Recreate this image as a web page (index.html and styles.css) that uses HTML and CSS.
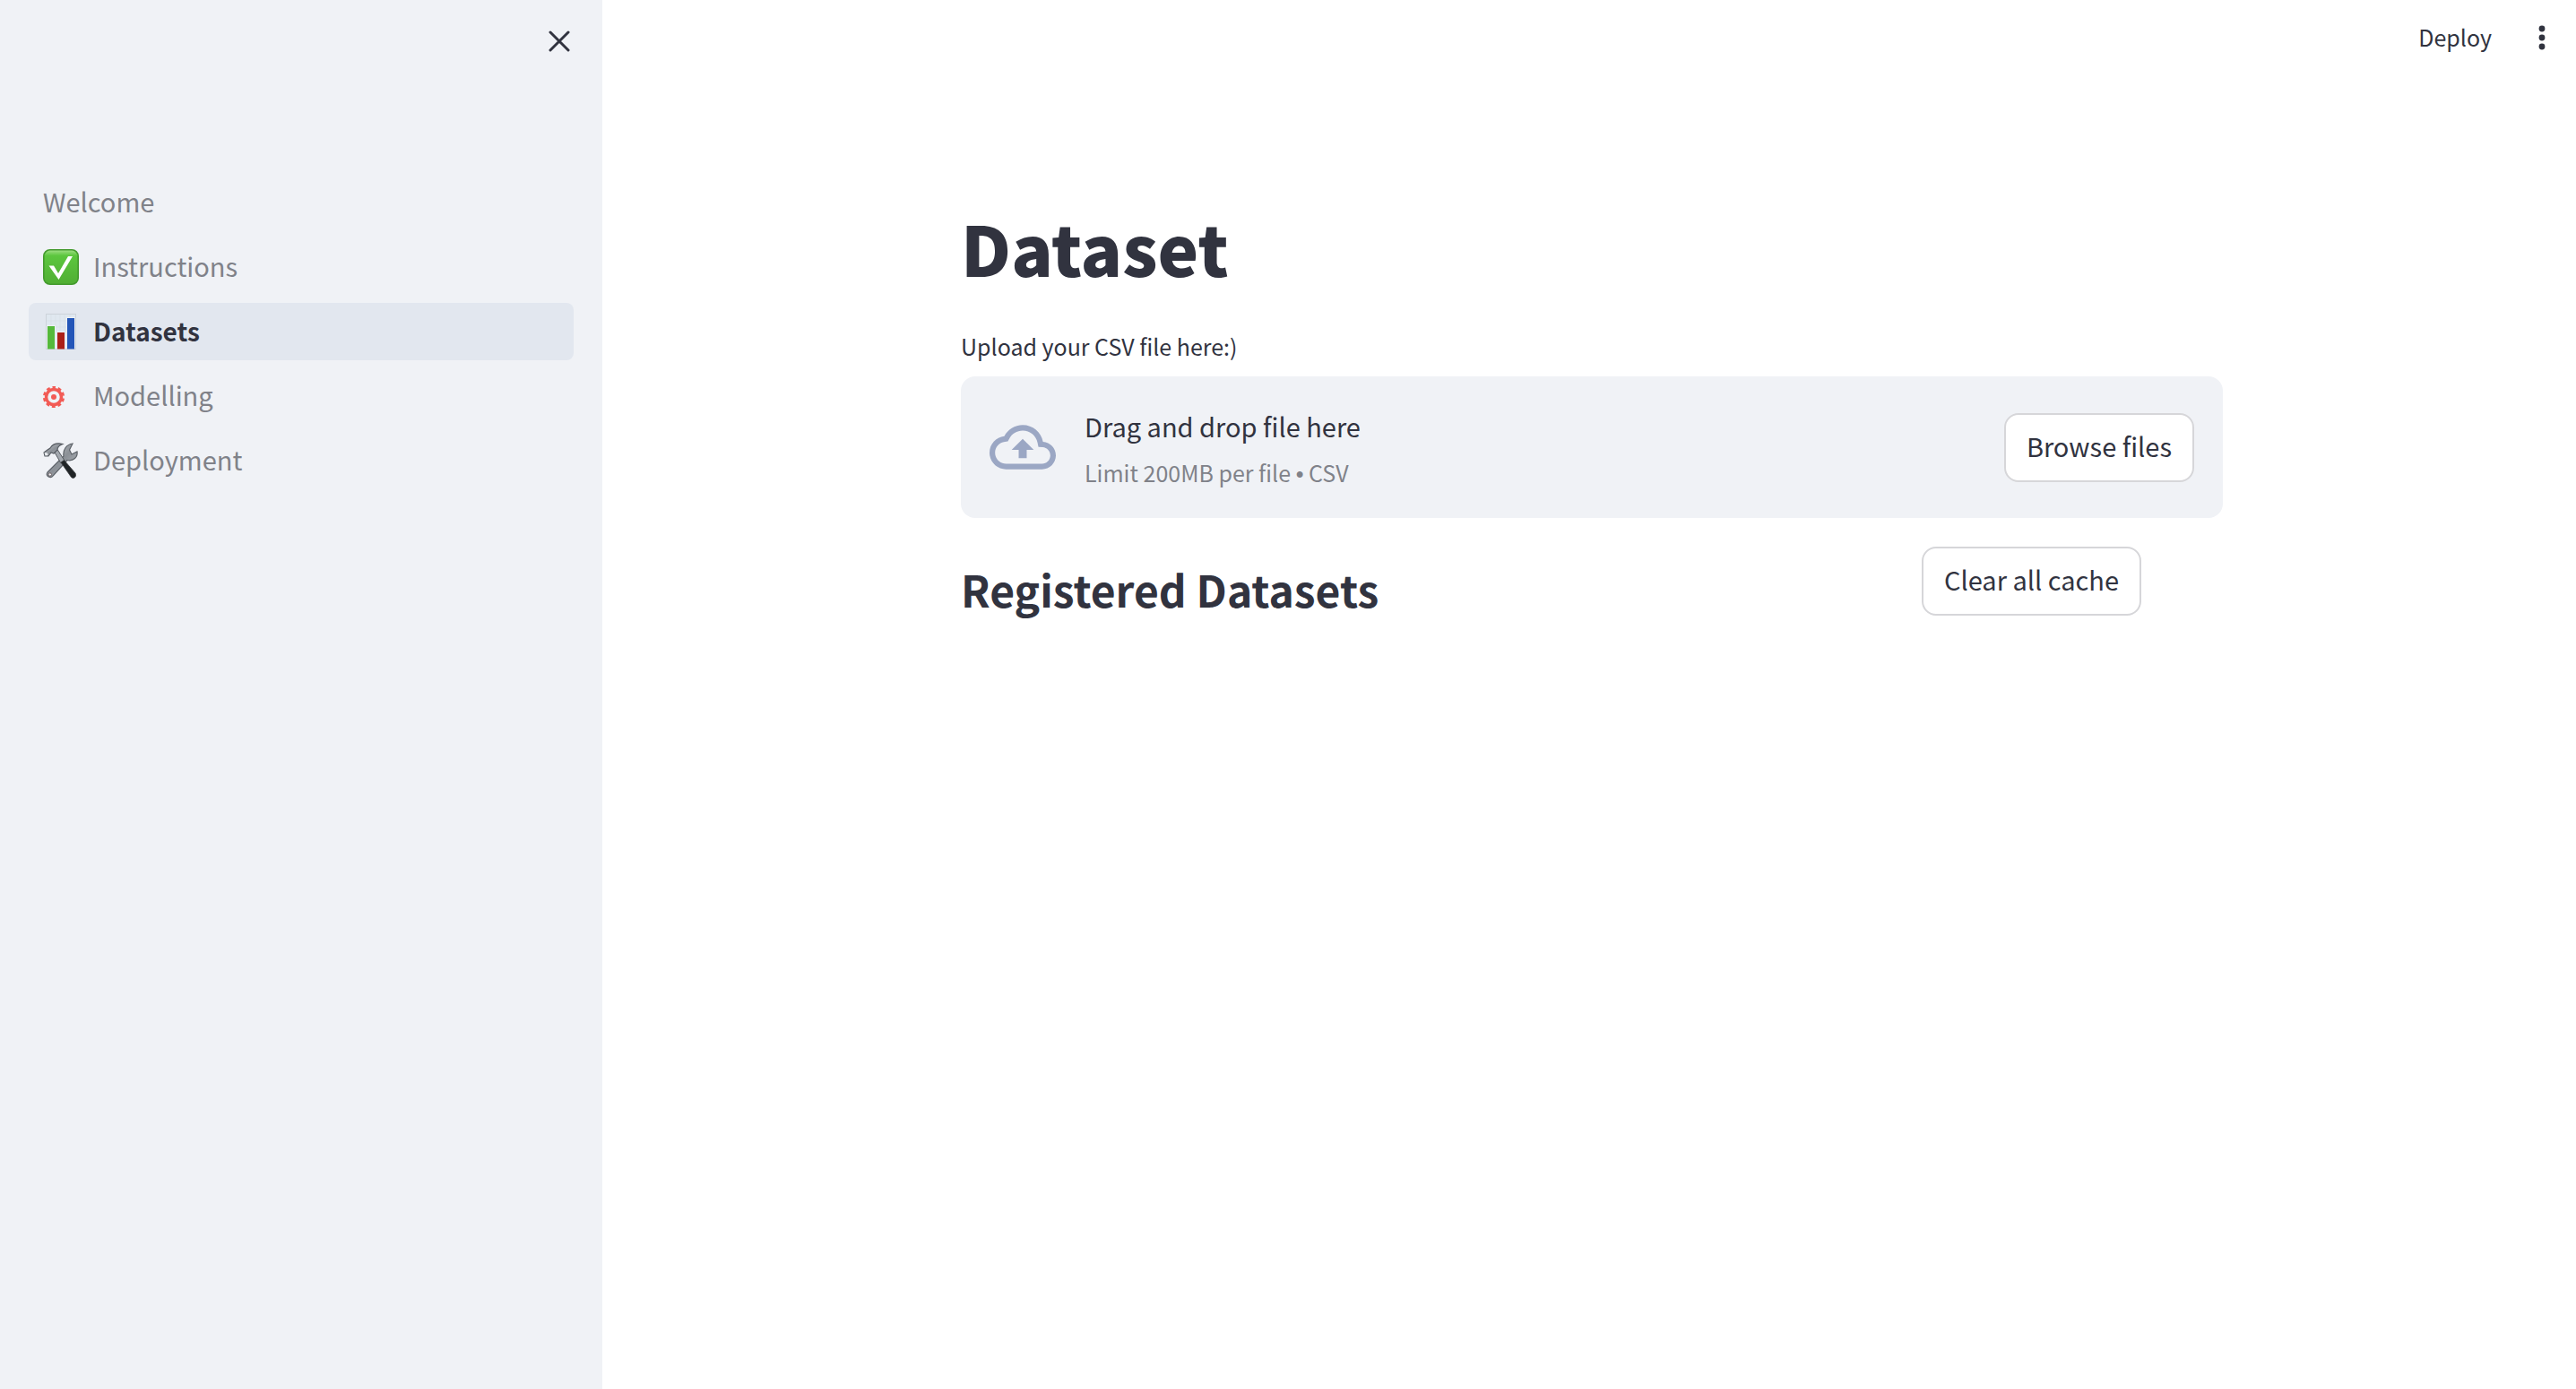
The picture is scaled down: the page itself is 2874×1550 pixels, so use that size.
FILE: index.html
```
<!DOCTYPE html>
<html lang="en">
<head>
<meta charset="utf-8">
<title>Datasets</title>
<link rel="stylesheet" href="styles.css">
</head>
<body>
<div class="app">
  <aside class="sidebar">
    <div class="sidebar-head">
      <button class="icon-button" type="button" aria-label="Close sidebar">
        <svg width="24" height="24" viewBox="0 0 24 24"><path d="M2 2L22 22M22 2L2 22" stroke="currentColor" stroke-width="3" stroke-linecap="round"/></svg>
      </button>
    </div>
    <nav class="nav">
      <a class="nav-link" href="#welcome"><span>Welcome</span></a>
      <a class="nav-link" href="#instructions">
        <svg class="nav-icon" viewBox="0 0 40 40">
          <defs><linearGradient id="green" x1="0" y1="0" x2="0" y2="1"><stop offset="0" stop-color="#a2df86"/><stop offset=".17" stop-color="#5cc63e"/><stop offset="1" stop-color="#50ae33"/></linearGradient></defs>
          <rect x=".8" y=".8" width="38.4" height="38.4" rx="7" fill="url(#green)" stroke="#439a2d" stroke-width="1.6"/>
          <path d="M6.500 18.500H12L17 27 28 8H33L17.500 34Z" fill="#fff"/>
        </svg>
        <span>Instructions</span>
      </a>
      <a class="nav-link active" href="#datasets" aria-current="page">
        <svg class="nav-icon" viewBox="0 0 40 40">
          <rect x="3.5" y=".5" width="33" height="39" fill="#e0e8f0" stroke="#cdd3da"/>
          <path d="M9 1V39M14 1V39M19 1V39M24 1V39M30 1V39M4 8H36M4 15H36M4 22H36M4 29H36" stroke="#d7dfe7" stroke-width=".7"/>
          <path d="M4 13H14V39H4ZM15 20H25V39H15ZM26 4H36V39H26Z" fill="#edf1f5"/>
          <rect x="5" y="14" width="8" height="25.500" fill="#55b93b"/>
          <rect x="16" y="21" width="8" height="18.500" fill="#ab2018"/>
          <rect x="27" y="5" width="8" height="34.500" fill="#2456b8"/>
        </svg>
        <span>Datasets</span>
      </a>
      <a class="nav-link" href="#modelling">
        <svg class="nav-icon" viewBox="0 0 40 40" fill="none" stroke="#f25b55">
          <circle cx="12" cy="21" r="8.500" stroke-width="3.500"/>
          <circle cx="12" cy="21" r="10.800" stroke-width="2.600" stroke-dasharray="3.900 2.886" stroke-dashoffset="1.950" transform="rotate(-90 12 21)"/>
          <circle cx="12" cy="21" r="3" fill="#f25b55" stroke="none"/>
        </svg>
        <span>Modelling</span>
      </a>
      <a class="nav-link" href="#deployment">
        <svg class="nav-icon" viewBox="0 0 40 40">
          <defs><linearGradient id="steel" x1="0" y1="0" x2="1" y2="1"><stop offset="0" stop-color="#c9cdd2"/><stop offset=".5" stop-color="#8b9096"/><stop offset="1" stop-color="#b7bcc2"/></linearGradient></defs>
          <path d="M5 33L23 15C22 8 26 2 33 1L29.500 8 32 13 38 10C39 16 34 21 27 19.500L11 37C9 40 2 38 5 33Z" fill="url(#steel)" stroke="#5e6369" stroke-width="1.200"/>
          <circle cx="7.800" cy="35.500" r="1.700" fill="#f0f2f6" stroke="#6e6264"/>
          <path d="M12.500 10L16 7.500 24 20 20 23Z" fill="#a3a8ae" stroke="#565b61"/>
          <path d="M1 11L5 8 8 6C11 1 16 0 22 1.500 18 3 16 5 16 8L12 12 9 11 6 15 2 15Z" fill="url(#steel)" stroke="#565b61" stroke-width="1.100"/>
          <path d="M1.500 11L5 11.500 5.500 14 2.500 14.500Z" fill="#e8ebee"/>
          <path d="M20 22L23.500 19.500 36 34C38 38 34 41 31.500 38.500Z" fill="#202426" stroke="#36393b" stroke-width=".8"/>
        </svg>
        <span>Deployment</span>
      </a>
    </nav>
  </aside>
  <div class="page">
    <header class="toolbar">
      <button class="deploy" type="button">Deploy</button>
      <button class="icon-button" type="button" aria-label="Main menu">
        <svg width="8" height="28" viewBox="0 0 8 28" fill="currentColor"><circle cx="4" cy="4" r="3.400"/><circle cx="4" cy="14" r="3.400"/><circle cx="4" cy="24" r="3.400"/></svg>
      </button>
    </header>
    <main class="main">
      <div class="content">
        <h1>Dataset</h1>
        <label class="upload-label" for="browse">Upload your CSV file here:)</label>
        <section class="dropzone">
          <svg class="cloud" viewBox="0 0 24 24" fill="currentColor"><path d="M19.350 10.040C18.670 6.590 15.640 4 12 4 9.110 4 6.600 5.640 5.350 8.040 2.340 8.360 0 10.910 0 14c0 3.310 2.690 6 6 6h13c2.760 0 5-2.240 5-5 0-2.640-2.050-4.780-4.650-4.960zM19 18H6c-2.210 0-4-1.790-4-4 0-2.050 1.530-3.760 3.560-3.970l1.070-.11.5-.95C8.080 7.140 9.940 6 12 6c2.620 0 4.880 1.860 5.390 4.430l.3 1.500 1.530.11c1.560.1 2.780 1.410 2.780 2.960 0 1.650-1.350 3-3 3zM8 13h2.550v3h2.900v-3H16l-4-4z"/></svg>
          <div class="drop-text">
            <span class="drop-title">Drag and drop file here</span>
            <small class="drop-limit">Limit 200MB per file <span class="bullet">•</span> CSV</small>
          </div>
          <button class="button" id="browse" type="button">Browse files</button>
        </section>
        <div class="columns">
          <h2>Registered Datasets</h2>
          <div class="action"><button class="button" type="button">Clear all cache</button></div>
        </div>
      </div>
    </main>
  </div>
</div>
</body>
</html>
```
FILE: styles.css
```
* {
  box-sizing: border-box;
}

body {
  margin: 0;
  background: #fff;
  color: #31333f;
  font-family: "Noto Sans CJK SC", "Noto Sans", sans-serif;
  font-size: 29px;
  line-height: 48px;
}

button {
  color: inherit;
  font: inherit;
  cursor: pointer;
}

svg {
  display: block;
}

.app {
  display: flex;
  min-height: 100vh;
}

.sidebar {
  flex: 0 0 672px;
  padding: 0 32px;
  background: #f0f2f6;
}

.sidebar-head {
  display: flex;
  justify-content: flex-end;
  height: 194px;
  padding-top: 30px;
}

.icon-button {
  display: flex;
  align-items: center;
  justify-content: center;
  width: 32px;
  height: 32px;
  padding: 0;
  border: 0;
  background: none;
}

.nav {
  display: flex;
  flex-direction: column;
  gap: 8px;
}

.nav-link {
  display: flex;
  align-items: center;
  gap: 16px;
  height: 64px;
  padding: 0 16px;
  border-radius: 8px;
  color: #808289;
  text-decoration: none;
}

.nav-link span {
  padding-bottom: 4px;
}

.nav-link.active {
  background: #e2e7ef;
  color: #31333f;
  font-size: 28px;
  font-weight: 600;
}

.nav-link.active span {
  padding-bottom: 2px;
}

.nav-icon {
  width: 40px;
  height: 40px;
}

.page {
  flex: 1;
  min-width: 0;
}

.toolbar {
  display: flex;
  align-items: center;
  justify-content: flex-end;
  gap: 40px;
  height: 84px;
  padding-right: 22px;
}

.deploy {
  padding: 0 0 2px;
  border: 0;
  background: none;
  font-size: 25px;
  line-height: 40px;
}

.main {
  padding: 144px 0 32px 6px;
}

.content {
  display: flex;
  flex-direction: column;
  max-width: 1408px;
  margin: 0 auto;
}

h1 {
  margin: 0 0 42px;
  font-size: 77px;
  font-weight: 900;
  line-height: 96px;
}

.upload-label {
  margin-bottom: 14px;
  font-size: 25px;
  line-height: 40px;
}

.dropzone {
  display: flex;
  align-items: center;
  gap: 32px;
  padding: 31px 32px;
  border-radius: 16px;
  background: #f0f2f6;
}

.cloud {
  width: 74px;
  height: 74px;
  color: #9ba7c4;
}

.drop-text {
  display: flex;
  flex: 1;
  flex-direction: column;
  gap: 8px;
}

.drop-limit {
  color: #808289;
  font-size: 25px;
  line-height: 40px;
}

.bullet {
  font-family: "Liberation Sans", sans-serif;
  line-height: 1;
}

.button {
  height: 77px;
  padding: 0 23px 5px;
  border: 2px solid #d6d6d9;
  border-radius: 16px;
  background: #fff;
}

.columns {
  display: grid;
  grid-template-columns: 2fr 1fr 1fr;
  gap: 32px;
  margin-top: 32px;
}

h2 {
  margin: 0;
  padding-top: 17px;
  font-size: 48px;
  font-weight: 600;
  line-height: 60px;
}

.action {
  grid-column: 3;
}
```
